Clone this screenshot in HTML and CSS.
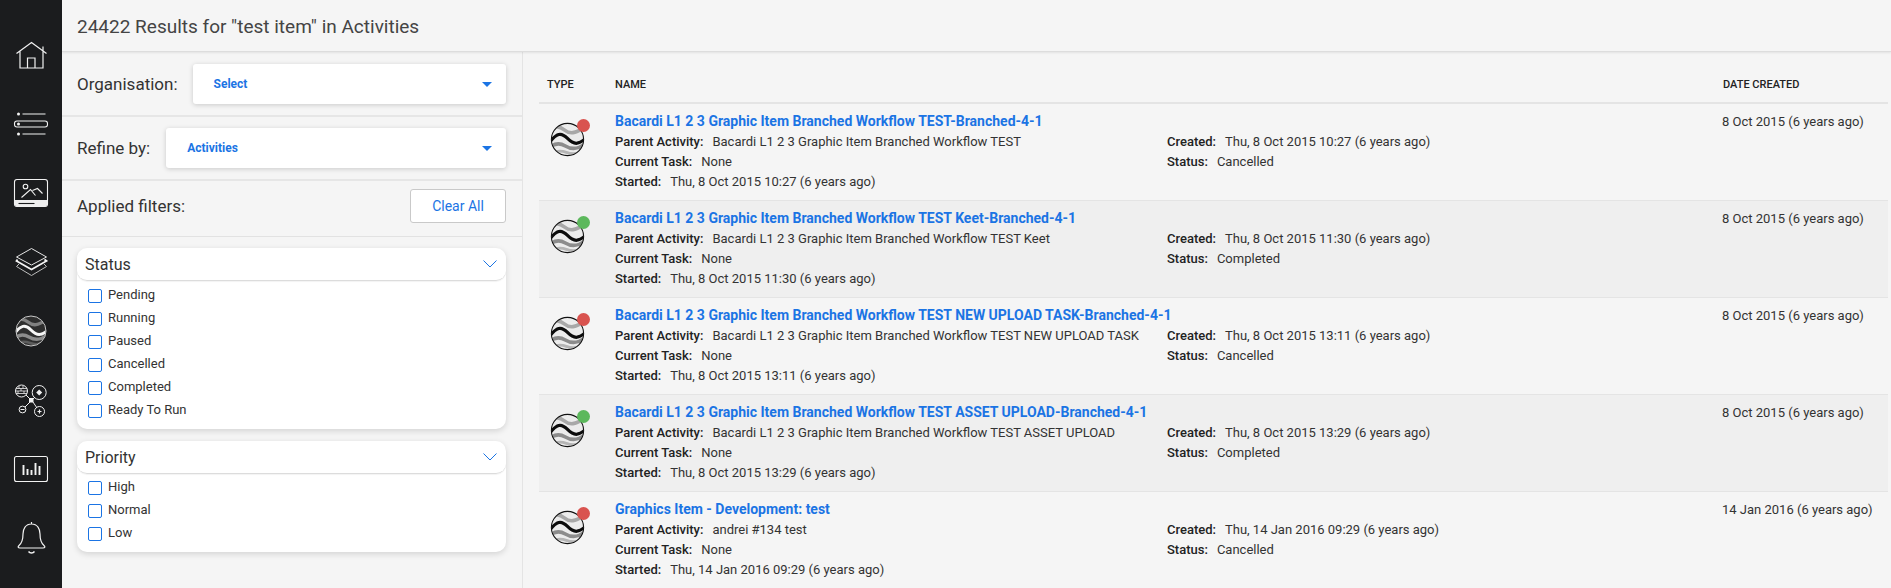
FILE: index.html
```html
<!DOCTYPE html>
<html lang="en">
<head>
<meta charset="utf-8">
<title>Search results</title>
<link rel="stylesheet" href="styles.css">
</head>
<body>
<svg class="defs" aria-hidden="true">
  <defs>
    <clipPath id="waveclip"><circle cx="20" cy="20" r="14.6"/></clipPath>
    <symbol id="wave-row" viewBox="0 0 40 40">
      <circle cx="20" cy="20" r="15" fill="#ececec"/>
      <g clip-path="url(#waveclip)" fill="none">
        <path d="M3 13c5-6 9-6 14-2s10 4 19-3" stroke="#a8a8a8" stroke-width="3.400"/>
        <path d="M3 28c5-5 10-5 15-2s11 4 18-2" stroke="#8c8c8c" stroke-width="3.400"/>
        <path d="M5 33c5-3 9-3 14-1s9 2 14-1" stroke="#b5b5b5" stroke-width="2.600"/>
        <path d="M3 23c7-9 11-10 17-4s10 6 17 0" stroke="#0c0c0c" stroke-width="3"/>
      </g>
      <circle cx="20" cy="20" r="15" fill="none" stroke="#111" stroke-width="1"/>
    </symbol>
  </defs>
</svg>
<div class="app">
  <nav class="rail">
    <div class="rail-item">
      <svg class="rail-icon" viewBox="0 0 40 40" fill="none" stroke="#f2f2f2" stroke-width="1.2">
        <path d="M5.5 18.5 20.5 7.5 35.500 18.500M9 16v17h23V16M32 11.500v5M16.500 33V23H24v10"/>
      </svg>
    </div>
    <div class="rail-item">
      <svg class="rail-icon" viewBox="0 0 40 40" fill="none" stroke="#f2f2f2" stroke-width="1.1">
        <path d="M11.500 10h23M11.500 30h23"/>
        <rect x="3.500" y="17" width="33" height="6" rx="2.500"/>
        <circle cx="7.500" cy="10" r="1.500" fill="#f2f2f2" stroke="none"/>
        <circle cx="7.500" cy="20" r="1.500" fill="#f2f2f2" stroke="none"/>
        <circle cx="7.500" cy="30" r="1.500" fill="#f2f2f2" stroke="none"/>
      </svg>
    </div>
    <div class="rail-item">
      <svg class="rail-icon" viewBox="0 0 40 40" fill="none" stroke="#f2f2f2" stroke-width="1.1">
        <rect x="3.500" y="6.500" width="33" height="27" rx="2.500"/>
        <path d="M4 27h32v4.500a2 2 0 0 1-2 2H6a2 2 0 0 1-2-2z" fill="#eeeeee" stroke="none"/>
        <path d="M7.500 30.500h16" stroke="#1b1c1e"/>
        <circle cx="14.500" cy="13.500" r="2.300"/>
        <path d="M10.500 24.500l9-8 5 6M21.500 17.500l5-2 5 5"/>
      </svg>
    </div>
    <div class="rail-item">
      <svg class="rail-icon" viewBox="0 0 40 40" fill="none" stroke="#e6e6e6" stroke-width="1">
        <path d="M5.500 15 20.500 6.500 35.500 15 20.500 23z"/>
        <path d="M6.500 17.500 5.500 19 20.500 27.500 35.500 19 33.500 17.500" stroke-width="1.800" stroke="#f5f5f5"/>
        <path d="M8 22 5.500 24.500 20.500 33.500 35.500 24.500 33 22" stroke="#bcbcbc"/>
      </svg>
    </div>
    <div class="rail-item">
      <svg class="rail-icon" viewBox="0 0 40 40" fill="none">
        <circle cx="20" cy="20" r="15" fill="#2e2e2e"/>
        <g clip-path="url(#waveclip)">
          <path d="M3 13c5-6 9-6 14-2s10 4 19-3" stroke="#808080" stroke-width="3.400"/>
          <path d="M3 28c5-5 10-5 15-2s11 4 18-2" stroke="#8c8c8c" stroke-width="3.400"/>
          <path d="M5 33c5-3 9-3 14-1s9 2 14-1" stroke="#5c5c5c" stroke-width="2.600"/>
          <path d="M3 23c7-9 11-10 17-4s10 6 17 0" stroke="#f6f6f6" stroke-width="3"/>
        </g>
        <circle cx="20" cy="20" r="15" stroke="#c9c9c9" stroke-width="1"/>
      </svg>
    </div>
    <div class="rail-item">
      <svg class="rail-icon" viewBox="0 0 40 40" fill="none" stroke="#f2f2f2" stroke-width="1">
        <circle cx="10.500" cy="11" r="6"/>
        <path d="M5 8.500h11M4.500 11h12M5 13.500h11M8 6v2.500M12 6v2.500M10 8.500V11M7 11v2.500M13 11v2.500" stroke-width=".8"/>
        <circle cx="28.200" cy="12.500" r="7"/>
        <path d="M28.200 9.500l3 3-3 3-3-3z" fill="#f2f2f2" stroke="none"/>
        <circle cx="11.500" cy="29.500" r="3.400"/>
        <path d="M9.500 29.500h4"/>
        <circle cx="28.500" cy="31.500" r="5"/>
        <path d="M28.500 29.500v4M26.500 31.500h4" stroke-width="1.200"/>
        <rect x="18" y="18" width="4.500" height="4.500" fill="#f2f2f2" stroke="none"/>
        <path d="M15 15l4 4M24 17l-3 3M19 22l-5 5M22 22l4 6"/>
      </svg>
    </div>
    <div class="rail-item">
      <svg class="rail-icon" viewBox="0 0 40 40" fill="none" stroke="#f2f2f2" stroke-width="1.100">
        <rect x="3.500" y="7.500" width="33" height="25" rx="2"/>
        <path d="M12.500 26V16M16.500 26V20M20.500 26V21M24.500 26V14M28.500 26V17" stroke-width="1.900"/>
      </svg>
    </div>
    <div class="rail-item">
      <svg class="rail-icon" viewBox="0 0 40 40" fill="none" stroke="#f2f2f2" stroke-width="1.200">
        <path d="M20.500 4v2M20.500 6c-6 0-8.500 5-8.500 10 0 6-1 9-4 11.500-1.500 1.500-1 2.500 1 2.500h23c2 0 2.500-1 1-2.500-3-2.500-4-5.500-4-11.500 0-5-2.500-10-8.500-10z"/>
        <path d="M17.500 33.500c1.500 2 4.500 2 6 0" stroke-width="1.500"/>
      </svg>
    </div>
  </nav>
  <div class="content">
    <header class="topbar">24422 Results for "test item" in Activities</header>
    <div class="body">
      <aside class="filters">
        <div class="filter-row org">
          <span class="filter-label">Organisation:</span>
          <div class="select"><span>Select</span><i class="caret"></i></div>
        </div>
        <div class="filter-row refine">
          <span class="filter-label">Refine by:</span>
          <div class="select"><span>Activities</span><i class="caret"></i></div>
        </div>
        <div class="applied">
          <span class="filter-label">Applied filters:</span>
          <button class="clear" type="button">Clear All</button>
        </div>
        <div class="groups">
          <section class="group">
            <div class="group-head">Status
              <svg class="chev" viewBox="0 0 14 8" fill="none"><path d="M.5.500 7 7l6.500-6.500" stroke="#1b74e4" stroke-width="1"/></svg>
            </div>
            <ul class="group-list">
              <li><i class="box"></i>Pending</li>
              <li><i class="box"></i>Running</li>
              <li><i class="box"></i>Paused</li>
              <li><i class="box"></i>Cancelled</li>
              <li><i class="box"></i>Completed</li>
              <li><i class="box"></i>Ready To Run</li>
            </ul>
          </section>
          <section class="group">
            <div class="group-head">Priority
              <svg class="chev" viewBox="0 0 14 8" fill="none"><path d="M.5.500 7 7l6.500-6.500" stroke="#1b74e4" stroke-width="1"/></svg>
            </div>
            <ul class="group-list">
              <li><i class="box"></i>High</li>
              <li><i class="box"></i>Normal</li>
              <li><i class="box"></i>Low</li>
            </ul>
          </section>
        </div>
      </aside>
      <main class="results">
        <div class="row head">
          <div>TYPE</div>
          <div>NAME</div>
          <div>DATE CREATED</div>
        </div>

        <div class="row item">
          <div class="type"><svg class="wave"><use href="#wave-row"/></svg><i class="dot red"></i></div>
          <div class="name">
            <a class="title">Bacardi L1 2 3 Graphic Item Branched Workflow TEST-Branched-4-1</a>
            <div class="meta">
              <p><b>Parent Activity:</b>Bacardi L1 2 3 Graphic Item Branched Workflow TEST</p>
              <p><b>Created:</b>Thu, 8 Oct 2015 10:27 (6 years ago)</p>
              <p><b>Current Task:</b>None</p>
              <p><b>Status:</b>Cancelled</p>
              <p><b>Started:</b>Thu, 8 Oct 2015 10:27 (6 years ago)</p>
            </div>
          </div>
          <div class="date">8 Oct 2015 (6 years ago)</div>
        </div>

        <div class="row item alt">
          <div class="type"><svg class="wave"><use href="#wave-row"/></svg><i class="dot green"></i></div>
          <div class="name">
            <a class="title">Bacardi L1 2 3 Graphic Item Branched Workflow TEST Keet-Branched-4-1</a>
            <div class="meta">
              <p><b>Parent Activity:</b>Bacardi L1 2 3 Graphic Item Branched Workflow TEST Keet</p>
              <p><b>Created:</b>Thu, 8 Oct 2015 11:30 (6 years ago)</p>
              <p><b>Current Task:</b>None</p>
              <p><b>Status:</b>Completed</p>
              <p><b>Started:</b>Thu, 8 Oct 2015 11:30 (6 years ago)</p>
            </div>
          </div>
          <div class="date">8 Oct 2015 (6 years ago)</div>
        </div>

        <div class="row item">
          <div class="type"><svg class="wave"><use href="#wave-row"/></svg><i class="dot red"></i></div>
          <div class="name">
            <a class="title">Bacardi L1 2 3 Graphic Item Branched Workflow TEST NEW UPLOAD TASK-Branched-4-1</a>
            <div class="meta">
              <p><b>Parent Activity:</b>Bacardi L1 2 3 Graphic Item Branched Workflow TEST NEW UPLOAD TASK</p>
              <p><b>Created:</b>Thu, 8 Oct 2015 13:11 (6 years ago)</p>
              <p><b>Current Task:</b>None</p>
              <p><b>Status:</b>Cancelled</p>
              <p><b>Started:</b>Thu, 8 Oct 2015 13:11 (6 years ago)</p>
            </div>
          </div>
          <div class="date">8 Oct 2015 (6 years ago)</div>
        </div>

        <div class="row item alt">
          <div class="type"><svg class="wave"><use href="#wave-row"/></svg><i class="dot green"></i></div>
          <div class="name">
            <a class="title">Bacardi L1 2 3 Graphic Item Branched Workflow TEST ASSET UPLOAD-Branched-4-1</a>
            <div class="meta">
              <p><b>Parent Activity:</b>Bacardi L1 2 3 Graphic Item Branched Workflow TEST ASSET UPLOAD</p>
              <p><b>Created:</b>Thu, 8 Oct 2015 13:29 (6 years ago)</p>
              <p><b>Current Task:</b>None</p>
              <p><b>Status:</b>Completed</p>
              <p><b>Started:</b>Thu, 8 Oct 2015 13:29 (6 years ago)</p>
            </div>
          </div>
          <div class="date">8 Oct 2015 (6 years ago)</div>
        </div>

        <div class="row item">
          <div class="type"><svg class="wave"><use href="#wave-row"/></svg><i class="dot red"></i></div>
          <div class="name">
            <a class="title">Graphics Item - Development: test</a>
            <div class="meta">
              <p><b>Parent Activity:</b>andrei #134 test</p>
              <p><b>Created:</b>Thu, 14 Jan 2016 09:29 (6 years ago)</p>
              <p><b>Current Task:</b>None</p>
              <p><b>Status:</b>Cancelled</p>
              <p><b>Started:</b>Thu, 14 Jan 2016 09:29 (6 years ago)</p>
            </div>
          </div>
          <div class="date">14 Jan 2016 (6 years ago)</div>
        </div>
      </main>
    </div>
  </div>
</div>
</body>
</html>
```
FILE: styles.css
```css
* { box-sizing: border-box; }
html, body { margin: 0; height: 100%; overflow: hidden; }
body { font-family: Roboto, "Liberation Sans", sans-serif; background: #f5f5f5; color: #333; }
.defs { width: 0; height: 0; display: block; position: absolute; }

.app { display: flex; height: 100vh; }

.rail { width: 62px; flex: none; background: #1b1c1e; padding-top: 20px; }
.rail-item { height: 69px; display: flex; align-items: center; justify-content: center; }
.rail-icon { width: 40px; height: 40px; display: block; }

.content { flex: 1; min-width: 0; display: flex; flex-direction: column; }
.topbar { height: 52px; flex: none; padding: 2px 0 0 15px; font-size: 19px; line-height: 50px; color: #444; border-bottom: 1px solid #ddd; box-shadow: 0 1px 2px rgba(0,0,0,.08); position: relative; }
.body { flex: 1; display: flex; min-height: 0; }

.filters { width: 461px; flex: none; border-right: 1px solid #e4e4e4; }
.filter-row { display: flex; align-items: center; padding-right: 16px; border-bottom: 2px solid #e6e6e6; }
.org { height: 65px; padding-top: 1px; }
.refine { height: 64px; }
.filter-label { font-size: 17px; color: #333; margin-left: 15px; }
.org .select { margin-left: 15px; }
.refine .select { margin-left: 16px; }
.select { flex: 1; height: 40px; background: #fff; border-radius: 3px; box-shadow: 0 1px 5px rgba(0,0,0,.18); display: flex; align-items: center; justify-content: space-between; padding: 0 14px 0 21px; font-size: 12px; font-weight: 700; color: #1b74e4; }
.caret { width: 0; height: 0; border-left: 5px solid transparent; border-right: 5px solid transparent; border-top: 5px solid #1b74e4; }
.applied { height: 56px; display: flex; align-items: center; justify-content: space-between; padding: 0 16px 6px 0; border-bottom: 1px solid #e2e2e2; }
.clear { width: 96px; height: 34px; border: 1px solid #c9c9c9; border-radius: 3px; background: #fff; color: #1b74e4; font: 400 14px Roboto, sans-serif; padding: 0; }

.groups { padding: 11px 16px 0 15px; display: flex; flex-direction: column; gap: 12px; }
.group { background: #fff; border-radius: 10px; box-shadow: 0 2px 6px rgba(0,0,0,.14); }
.group-head { height: 33px; padding: 0 9px 0 8px; display: flex; align-items: center; justify-content: space-between; font-size: 16px; color: #333; border-radius: 10px; border-bottom: 1px solid #dcdcdc; box-shadow: 0 1px 1px rgba(0,0,0,.05); }
.chev { width: 14px; height: 8px; display: block; }
.group-list { list-style: none; margin: 0; padding: 2px 0 8px 11px; font-size: 13px; color: #333; }
.group + .group .group-list { padding-top: 1px; }
.group-list li { height: 23px; display: flex; align-items: center; gap: 6px; }
.box { width: 14px; height: 14px; border: 1px solid #1b74e4; border-radius: 2px; background: #fff; flex: none; position: relative; top: 1px; }

.results { flex: 1; min-width: 0; padding: 0 3px 0 16px; }
.row { display: grid; grid-template-columns: 76px 1107px 1fr; border-bottom: 1px solid #e4e4e4; }
.head { height: 52px; padding: 25px 0 0 8px; grid-template-columns: 68px 1108px 1fr; font-size: 11px; line-height: 16px; font-weight: 500; color: #222; border-bottom-width: 2px; }
.item { height: 97px; }
.alt { background: #efefef; }
.type { position: relative; }
.wave { position: absolute; left: 7px; top: 14px; width: 43px; height: 43px; display: block; }
.dot { position: absolute; left: 38px; top: 15px; width: 13px; height: 13px; border-radius: 50%; }
.red { background: #d9534f; }
.green { background: #5cb85c; }
.name { padding-top: 7px; }
.title { display: block; font-size: 14px; line-height: 21px; color: #1b74e4; font-weight: 700; }
.meta { display: grid; grid-template-columns: 552px 1fr; grid-auto-rows: 20px; font-size: 13px; line-height: 20px; color: #333; }
.meta p { margin: 0; }
.meta b { font-weight: 500; margin-right: 9px; color: #222; }
.date { padding-top: 8px; font-size: 13px; line-height: 20px; color: #333; }
```
